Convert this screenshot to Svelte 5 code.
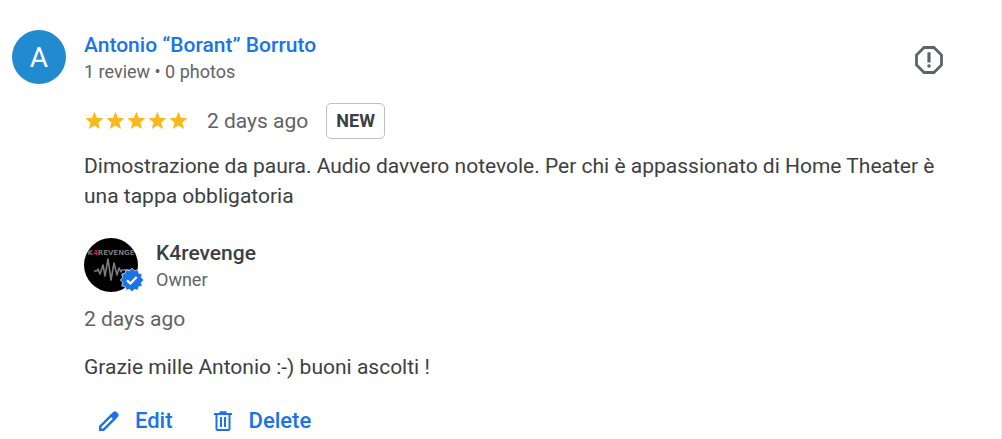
<script>
  const stars = [1, 2, 3, 4, 5];

  // Outline of the verified badge: a twelve-pointed burst.
  const burst = Array.from({ length: 24 }, (_, i) => {
    const radius = i % 2 ? 9.6 : 11.8;
    const angle = (i * Math.PI) / 12;
    return `${(12 + radius * Math.sin(angle)).toFixed(2)},${(12 - radius * Math.cos(angle)).toFixed(2)}`;
  }).join(' ');
</script>

<article class="review">
  <header class="author">
    <div class="avatar" aria-hidden="true">A</div>
    <div class="who">
      <a class="name" href="#author">Antonio “Borant” Borruto</a>
      <span class="meta">1 review • 0 photos</span>
    </div>
    <button class="report" aria-label="Report review">
      <svg viewBox="0 0 28 28" width="28" height="28" aria-hidden="true">
        <path d="M9.1 1.5h9.8l7.6 7.6v9.8l-7.6 7.6H9.1l-7.6-7.6V9.1z" fill="none" stroke="#5f6368" stroke-width="2.8" />
        <path d="M12.4 6.3h3.2v10.2h-3.2z" fill="#5f6368" />
        <circle cx="14" cy="20" r="1.8" fill="#5f6368" />
      </svg>
    </button>
  </header>

  <div class="body">
    <div class="rating">
      <div class="stars" role="img" aria-label="5 out of 5 stars">
        {#each stars as star (star)}
          <svg viewBox="0 0 21 21" width="21" height="21" aria-hidden="true">
            <path d="M10.4 .8l2.4 6 6.6.5-5.1 4.2 1.7 6.5-5.6-3.6L4.8 18l1.700-6.500L1.400 7.300 8 6.800z" fill="#fbb81b" />
          </svg>
        {/each}
      </div>
      <span class="time">2 days ago</span>
      <span class="new">NEW</span>
    </div>

    <p class="text">Dimostrazione da paura. Audio davvero notevole. Per chi è appassionato di Home Theater è una tappa obbligatoria</p>

    <section class="reply">
      <div class="owner">
        <div class="logo">
          <svg viewBox="0 0 54 54" width="54" height="54" aria-hidden="true">
            <defs>
              <clipPath id="disc"><circle cx="27" cy="27" r="27" /></clipPath>
            </defs>
            <g clip-path="url(#disc)">
              <rect width="54" height="54" fill="#000" />
              <text x="27" y="17" text-anchor="middle" class="brand">K<tspan class="four">4</tspan>REVENGE</text>
              <path d="M10 33h3l1-2 2 5 3-9 2 11 3-17 3 21 3-17 3 12 2-7 2 4 1-2h8" fill="none" stroke="#7c7c7c" stroke-width="1.6" stroke-linejoin="round" />
            </g>
          </svg>
          <svg class="badge" viewBox="0 0 24 24" width="24" height="24" role="img" aria-label="Verified">
            <polygon points={burst} fill="#1a73e8" stroke="#fff" stroke-width=".7" stroke-linejoin="round" />
            <path d="M7 12.300l3.400 3.200 6.300-6.500" fill="none" stroke="#fff" stroke-width="2.300" />
          </svg>
        </div>
        <div class="who">
          <span class="name owner-name">K4revenge</span>
          <span class="meta">Owner</span>
        </div>
      </div>
      <span class="time">2 days ago</span>
      <p class="text">Grazie mille Antonio :-) buoni ascolti !</p>
      <div class="actions">
        <button class="action">
          <svg viewBox="0 0 24 24" width="24" height="24" aria-hidden="true">
            <path d="M3.200 17.500v3.300h3.300L17.600 9.700l-3.300-3.300z" fill="none" stroke="#1a73e8" stroke-width="2.400" />
            <path d="M12.800 6.400L16.200 3q1.600-1.500 3.200 0l1.600 1.600q1.500 1.600 0 3.200L17.600 11.200z" fill="#1a73e8" />
          </svg>
          Edit
        </button>
        <button class="action">
          <svg viewBox="0 0 24 24" width="24" height="24" aria-hidden="true">
            <path d="M3 4h5.5V2.3h7V4H21v2H3z" fill="#1a73e8" />
            <path d="M5.5 5v15q0 1 1 1h11q1 0 1-1V5M10 8v10M14 8v10" fill="none" stroke="#1a73e8" stroke-width="2" />
          </svg>
          Delete
        </button>
      </div>
    </section>
  </div>
</article>

<style>
  :global(body) {
    background: #fff;
  }

  .review {
    box-sizing: border-box;
    padding: 30px 24px 4px 12px;
    border-right: 1px solid #e8eaed;
    font-family: Roboto, "Liberation Sans", sans-serif;
    font-size: 21px;
    line-height: 30px;
    color: #3c4043;
  }

  .author,
  .owner {
    display: flex;
    gap: 18px;
  }

  .avatar {
    display: grid;
    place-items: center;
    width: 54px;
    height: 54px;
    border-radius: 50%;
    background: #228bd0;
    color: #fff;
    font-size: 28px;
    line-height: 56px;
  }

  .who {
    display: flex;
    flex-direction: column;
  }

  .name {
    color: #1a73e8;
    font-weight: 500;
    text-decoration: none;
  }

  .owner-name {
    color: #3c4043;
  }

  .meta {
    color: #5f6368;
    font-size: 18px;
    line-height: 24px;
  }

  button {
    padding: 0;
    border: 0;
    background: none;
    font: inherit;
    cursor: pointer;
  }

  .report {
    display: flex;
    align-items: center;
    height: 60px;
    margin: 0 34px 0 auto;
  }

  .body {
    padding: 0 12px 0 72px;
  }

  .rating {
    display: flex;
    align-items: center;
    gap: 18px;
    margin-top: 13px;
  }

  .stars {
    display: flex;
  }

  .time {
    color: #5f6368;
  }

  .new {
    padding: 2px 9px;
    border: 1px solid #bdc1c6;
    border-radius: 5px;
    font-size: 18px;
    font-weight: 700;
  }

  .text {
    margin: 12px 0 0;
  }

  .reply {
    margin-top: 27px;
  }

  .owner {
    margin-bottom: 12px;
  }

  .logo {
    position: relative;
    height: 54px;
  }

  .logo svg {
    display: block;
  }

  .logo .badge {
    position: absolute;
    right: -6px;
    bottom: 0;
  }

  .brand {
    fill: #777;
    font-family: "DejaVu Sans", sans-serif;
    font-size: 7px;
    font-weight: 700;
  }

  .four {
    fill: #e8132b;
  }

  .reply .text {
    margin-top: 18px;
  }

  .actions {
    display: flex;
    gap: 38px;
    padding: 24px 0 0 13px;
  }

  .action {
    display: flex;
    align-items: center;
    gap: 14px;
    color: #1a73e8;
    font-size: 22px;
    font-weight: 500;
  }
</style>
